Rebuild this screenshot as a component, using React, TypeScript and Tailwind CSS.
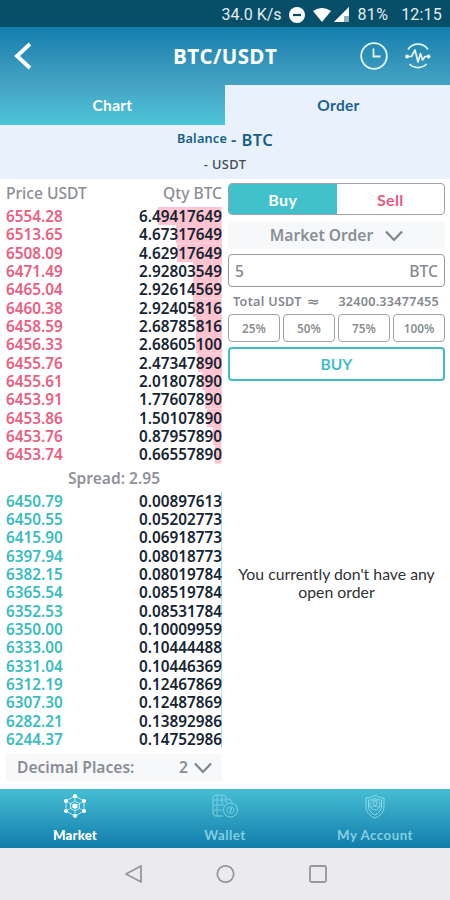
import clsx from "clsx";

interface OrderRow {
  price: string;
  qty: string;
}

const asks: OrderRow[] = [
  { price: "6554.28", qty: "6.49417649" },
  { price: "6513.65", qty: "4.67317649" },
  { price: "6508.09", qty: "4.62917649" },
  { price: "6471.49", qty: "2.92803549" },
  { price: "6465.04", qty: "2.92614569" },
  { price: "6460.38", qty: "2.92405816" },
  { price: "6458.59", qty: "2.68785816" },
  { price: "6456.33", qty: "2.68605100" },
  { price: "6455.76", qty: "2.47347890" },
  { price: "6455.61", qty: "2.01807890" },
  { price: "6453.91", qty: "1.77607890" },
  { price: "6453.86", qty: "1.50107890" },
  { price: "6453.76", qty: "0.87957890" },
  { price: "6453.74", qty: "0.66557890" },
];

const bids: OrderRow[] = [
  { price: "6450.79", qty: "0.00897613" },
  { price: "6450.55", qty: "0.05202773" },
  { price: "6415.90", qty: "0.06918773" },
  { price: "6397.94", qty: "0.08018773" },
  { price: "6382.15", qty: "0.08019784" },
  { price: "6365.54", qty: "0.08519784" },
  { price: "6352.53", qty: "0.08531784" },
  { price: "6350.00", qty: "0.10009959" },
  { price: "6333.00", qty: "0.10444488" },
  { price: "6331.04", qty: "0.10446369" },
  { price: "6312.19", qty: "0.12467869" },
  { price: "6307.30", qty: "0.12487869" },
  { price: "6282.21", qty: "0.13892986" },
  { price: "6244.37", qty: "0.14752986" },
];

const percents = ["25%", "50%", "75%", "100%"];

const StatusBar = () => (
  <div className="flex h-[27px] items-center justify-end bg-[#074e68] pr-2 pt-0.5 font-['Roboto',sans-serif] text-[16px] text-[#e3edf0]">
    <span>34.0 K/s</span>
    <svg className="ml-[7px] h-4 w-4" viewBox="0 0 16 16">
      <circle cx="8" cy="8" r="8" fill="#fff" />
      <path d="M4 8h8" stroke="#074e68" strokeWidth="2.2" />
    </svg>
    <svg className="ml-2 h-4 w-[38px]" viewBox="0 0 38 16">
      <path d="M0 4Q9 -2 18 4L9 15Z" fill="#fff" />
      <path d="M36 0V15H21Z" fill="#8fb0bd" />
      <path d="M31 5V15H21Z" fill="#fff" />
      <path d="M36 0V9H31V5Z" fill="#fff" />
    </svg>
    <span className="ml-[7px] tracking-[0.3px]">81%</span>
    <span className="ml-[13px] tracking-[0.2px]">12:15</span>
  </div>
);

const Header = () => (
  <header className="flex h-[98px] flex-col bg-linear-to-b from-[#107eac] via-[#46a3c4] via-60% to-[#4cc5d8] font-['Lato',sans-serif]">
    <div className="flex h-[58px] items-center">
      <svg className="ml-[13px] h-7 w-[20px]" viewBox="0 0 20 28" fill="none" stroke="#fff" strokeWidth="3.8">
        <path d="M17 2L4 14L17 26" />
      </svg>
      <h1 className="ml-[140px] w-[106px] whitespace-nowrap font-['Open_Sans',sans-serif] text-[20.5px] font-bold tracking-[0.4px] text-white">
        BTC/USDT
      </h1>
      <svg className="ml-[81px] h-7 w-7" viewBox="0 0 28 28" fill="none" stroke="#e6f5fa" strokeWidth="1.8">
        <circle cx="14" cy="14" r="12.8" />
        <path d="M13.5 6.5V14.5H20.5" />
      </svg>
      <svg className="ml-4 h-7 w-7" viewBox="0 0 28 28" fill="none" stroke="#e6f5fa" strokeWidth="1.7" strokeLinejoin="round">
        <path d="M4 7.5A12 12 0 0 1 24 7.5" />
        <path d="M5.5 22A12 12 0 0 0 22.5 22" />
        <path d="M3 14.5H7.5L11 8L14 20L16.5 11.5L18.5 18L21 14.5H25" />
        <circle cx="3" cy="14.5" r="2" fill="#e6f5fa" stroke="none" />
        <circle cx="24.5" cy="14.5" r="2" fill="#e6f5fa" stroke="none" />
      </svg>
    </div>
    <div className="flex h-10 pt-0 text-[15.5px] font-bold tracking-[0.3px]">
      <div className="flex w-1/2 items-center justify-center pt-0.5 text-white">Chart</div>
      <div className="flex w-1/2 items-center justify-center bg-[#e9f1fc] pl-0.5 pt-0.5 text-[#1c6291]">Order</div>
    </div>
  </header>
);

const BookRow = ({ row, side }: { row: OrderRow; side: "ask" | "bid" }) => (
  <div className="flex h-[18.33px] items-center justify-between">
    <span className={side === "ask" ? "text-[#ea607f]" : "text-[#3bbcc0]"}>{row.price}</span>
    <span
      className="bg-right bg-no-repeat text-[#172532]"
      style={{
        backgroundImage: side === "ask" ? "linear-gradient(#ffc4d1, #ffc4d1)" : "linear-gradient(#a9e2e1, #a9e2e1)",
        backgroundSize: `${Math.max(1, Number(row.qty) * 9.8)}px 100%`,
      }}
    >
      {row.qty}
    </span>
  </div>
);

const Chevron = ({ className }: { className?: string }) => (
  <svg className={clsx("h-3 w-[18px]", className)} viewBox="0 0 18 12" fill="none" stroke="#7f858c" strokeWidth="2.2">
    <path d="M1 1.5L9 10L17 1.5" />
  </svg>
);

const OrderBook = () => (
  <section className="flex w-[226px] flex-col pl-[6px] pr-1">
    <div className="flex h-7 items-center justify-between pt-0.5 text-[15.6px] font-medium text-[#8a8d93]">
      <span>Price USDT</span>
      <span>Qty BTC</span>
    </div>
    <div className="text-[15.3px] leading-[18.33px] font-semibold">
      {asks.map((row) => (
        <BookRow key={row.price} row={row} side="ask" />
      ))}
    </div>
    <div className="flex h-[29px] items-center justify-center pt-px text-[15.6px] font-semibold text-[#909399]">Spread: 2.95</div>
    <div className="-mt-px text-[15.3px] leading-[18.33px] font-semibold">
      {bids.map((row) => (
        <BookRow key={row.price} row={row} side="bid" />
      ))}
    </div>
    <div className="mt-[6px] flex h-[27px] items-center bg-[#f7f8f9] pl-[11px] pr-[10px] pt-px text-[15.6px] font-semibold text-[#898d93]">
      <span>Decimal Places:</span>
      <span className="ml-auto">2</span>
      <Chevron className="ml-[6px]" />
    </div>
  </section>
);

const OrderForm = () => (
  <section className="flex w-[224px] flex-col pl-[2px] pr-[5px] pt-1 font-semibold">
    <div className="flex h-8 overflow-hidden rounded-[4px] border border-[#a0a3a6] font-['Lato',sans-serif] text-[16px] font-bold tracking-[0.3px]">
      <div className="flex w-1/2 items-center justify-center bg-[#42c1cd] pt-px text-white">Buy</div>
      <div className="flex w-1/2 items-center justify-center pt-px text-[#e55c82]">Sell</div>
    </div>
    <div className="mt-[6px] flex h-7 items-center justify-center rounded bg-[#f7f8fa] pt-0.5 text-[15.6px] text-[#898e95]">
      Market Order
      <Chevron className="ml-3" />
    </div>
    <div className="mt-[5px] flex h-[33px] items-center justify-between rounded-[4px] border border-[#95999d] px-[6px] pt-[3px] text-[15.6px] font-medium text-[#85898e]">
      <span>5</span>
      <span className="tracking-[0.1px]">BTC</span>
    </div>
    <div className="flex h-[27px] items-center justify-between pl-[5px] pr-[6px] pt-[3px] text-[12.6px] text-[#84888e]">
      <span className="tracking-[0.3px]">
        Total USDT <span className="ml-[3px] inline-block scale-x-125 font-['DejaVu_Sans',sans-serif]">≈</span>
      </span>
      <span className="tracking-[0.25px]">32400.33477455</span>
    </div>
    <div className="flex gap-[3px] text-[11.8px] text-[#8b8f93]">
      {percents.map((percent) => (
        <div key={percent} className="flex h-7 flex-1 items-center justify-center rounded-[4px] border border-[#a0a3a6] pt-0.5">
          {percent}
        </div>
      ))}
    </div>
    <div className="mt-[5px] flex h-[34px] items-center justify-center rounded-[4px] border-2 border-[#42bdc7] pt-0.5 font-['Lato',sans-serif] text-[15.5px] font-bold text-[#42bdc7]">
      BUY
    </div>
    <p className="mt-[184px] text-center font-['Lato',sans-serif] text-[15.8px] leading-[18px] font-normal text-[#303236]">
      You currently don't have any
      <br />
      open order
    </p>
  </section>
);

const MarketIcon = () => (
  <svg className="h-6 w-6" viewBox="0 0 24 24" fill="none" stroke="#c9f1f7" strokeWidth="0.9">
    <path d="M12 2L21 7V17L12 22L3 17V7Z" />
    <path d="M12 7L16.5 9.5V14.5L12 17L7.5 14.5V9.5Z" />
    <path d="M12 2V7M21 7L12 12L3 7M3 17L12 12L21 17M12 12V22" strokeWidth="0.7" />
    <g fill="#fff" stroke="none">
      <circle cx="12" cy="2.2" r="2.1" />
      <circle cx="21" cy="7" r="2.1" />
      <circle cx="21" cy="17" r="2.1" />
      <circle cx="12" cy="21.8" r="2.1" />
      <circle cx="3" cy="17" r="2.1" />
      <circle cx="3" cy="7" r="2.1" />
      <circle cx="12" cy="12" r="2.6" />
    </g>
  </svg>
);

const WalletIcon = () => (
  <svg className="h-6 w-[26px]" viewBox="0 0 26 24" fill="none" stroke="#7fd4e3" strokeWidth="1">
    <path d="M11 22H3L1 20V3L3 1H12L14 3V9" />
    <path d="M1 6H14M1 11H12M1 16H10M5 1V22M10 1V11" strokeWidth="0.8" />
    <path d="M14 5H18L20 8" />
    <circle cx="18.5" cy="16" r="7" />
    <circle cx="18.5" cy="16" r="3.5" strokeWidth="0.7" />
    <path d="M17.5 14H19.5V16H17.5M18.5 16V18.5" strokeWidth="0.9" />
  </svg>
);

const AccountIcon = () => (
  <svg className="h-[25px] w-5" viewBox="0 0 20 25" fill="none" stroke="#8ddbe7" strokeWidth="1">
    <path d="M10 1C7 3 4 4 1 4V13C1 18 5 22 10 24C15 22 19 18 19 13V4C16 4 13 3 10 1Z" />
    <path d="M10 4C8 5.5 6 6 3.5 6V13C4 17 7 19.5 10 21C13 19.5 16 17 16.5 13V6C14 6 12 5.5 10 4Z" />
    <circle cx="10" cy="11" r="5" />
    <circle cx="10" cy="9.5" r="2" />
    <path d="M6 14C7 11.5 13 11.5 14 14" />
  </svg>
);

const navItems = [
  { label: "Market", icon: <MarketIcon />, active: true },
  { label: "Wallet", icon: <WalletIcon />, active: false },
  { label: "My Account", icon: <AccountIcon />, active: false },
];

const BottomNav = () => (
  <nav className="flex h-[59px] bg-linear-to-b from-[#45bed3] to-[#0f7dab] font-['Lato',sans-serif]">
    {navItems.map((item) => (
      <div key={item.label} className="flex flex-1 flex-col items-center pt-1">
        <div className="flex h-[26px] items-center">{item.icon}</div>
        <span
          className={clsx(
            "mt-[7px] text-[13.3px] leading-[18px]",
            item.active ? "font-black tracking-[0.1px] text-white" : "font-bold tracking-[0.5px] text-[#83cfe2]"
          )}
        >
          {item.label}
        </span>
      </div>
    ))}
  </nav>
);

const SystemNav = () => (
  <div className="flex h-[52px] items-center bg-[#ebebed] pl-[124px]">
    <svg className="h-5 w-[195px] overflow-visible" viewBox="0 0 195 20" fill="none" stroke="#96979a" strokeWidth="1.8">
      <path d="M17 2V18L2 10Z" strokeLinejoin="round" />
      <circle cx="101.5" cy="10" r="8.2" />
      <rect x="186" y="2" width="16" height="16" rx="1.5" />
    </svg>
  </div>
);

const App = () => {
  return (
    <div className="flex h-[900px] w-[450px] flex-col overflow-hidden bg-white font-['Noto_Sans',sans-serif]">
      <StatusBar />
      <Header />
      <div className="h-[54px] bg-[#e9f1fc] text-center">
        <div className="flex h-[31px] items-center justify-center gap-1 font-semibold text-[#176184]">
          <span className="pb-1 text-[12.7px] tracking-[0.2px]">Balance</span>
          <span className="text-[16.5px] tracking-[0.4px]">- BTC</span>
        </div>
        <div className="text-[12.8px] leading-[17px] font-medium tracking-[0.4px] text-[#404955]">- USDT</div>
      </div>
      <main className="flex h-[610px]">
        <OrderBook />
        <OrderForm />
      </main>
      <BottomNav />
      <SystemNav />
    </div>
  );
};

export default App;
